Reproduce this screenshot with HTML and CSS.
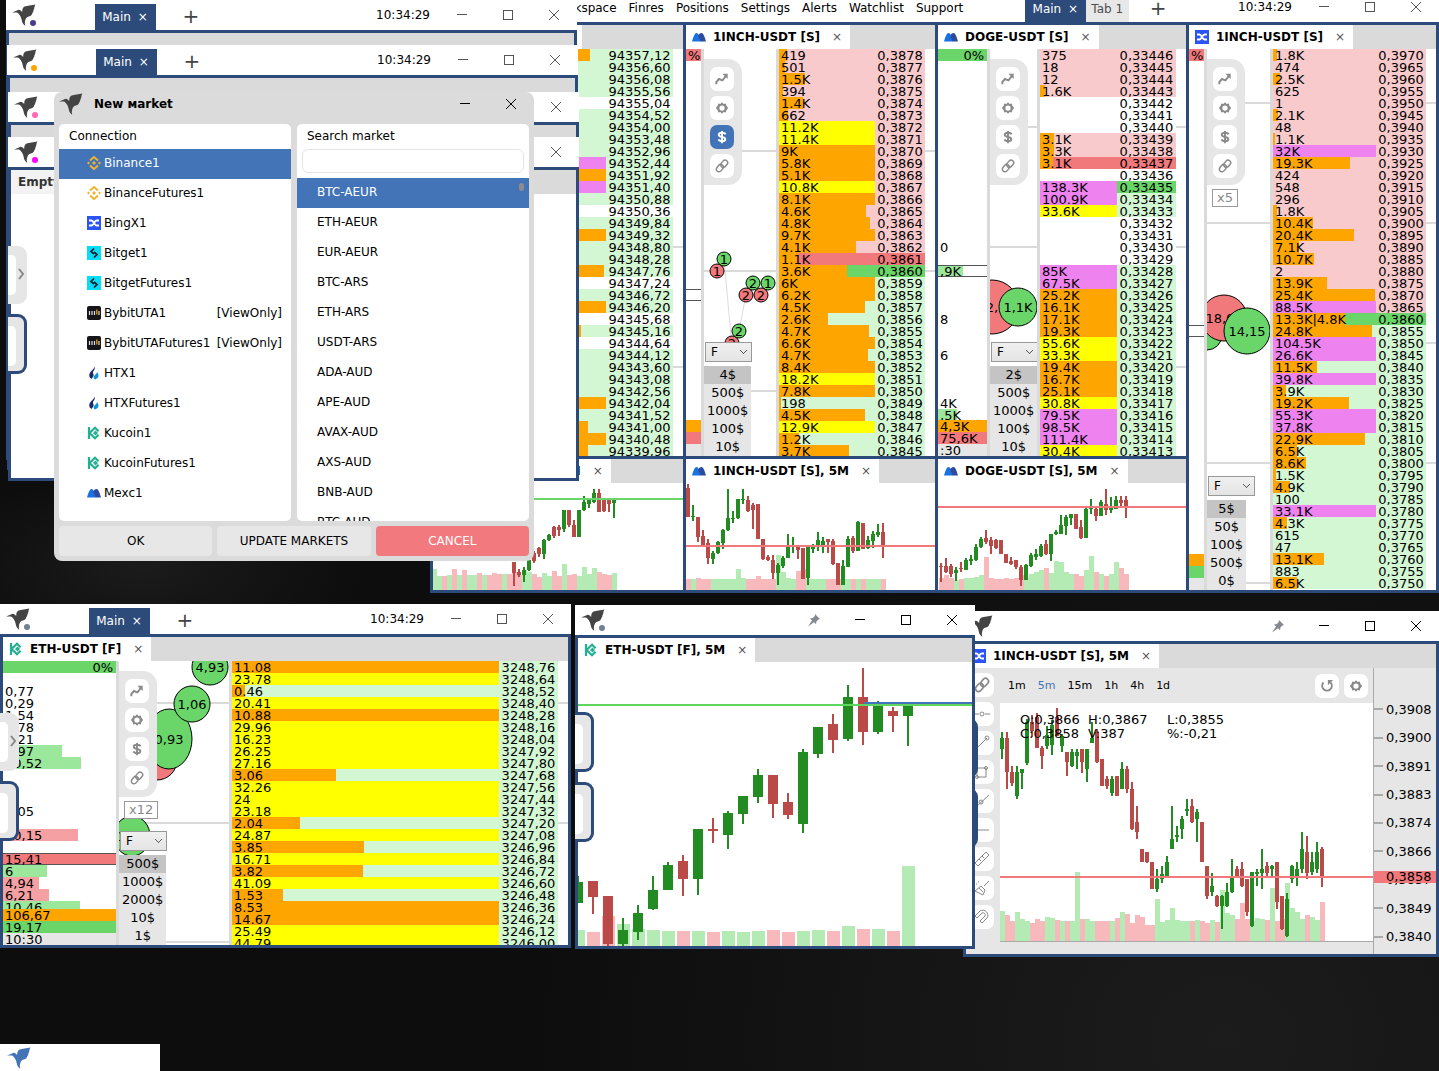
FILE: index.html
```html
<!DOCTYPE html>
<html lang="en">
<head>
    <meta charset="UTF-8">
    <meta name="viewport" content="width=device-width, initial-scale=1.0">
    <title>Trading desktop</title>
    <link rel="stylesheet" href="styles.css">
</head>
<body>

    <!-- Shared icons -->
    <svg class="sprite" aria-hidden="true">
        <symbol id="bird" viewBox="0 0 24 22"><path d="M0 8.400L5 6.600C6 5.600 7.600 5.600 8.600 6.400L10.200 8C10 5 11 3.400 12.600 2.600 15 1.200 20 1.400 23.400.4 22 2.400 22.800 4.400 21.400 6.400 21.600 8 19.800 9.400 19.600 11 18 12.800 15.600 12.400 14.200 14 13 16 12.400 19 13.200 21.800 11.400 20.600 10 18.600 9.800 16.600 9.400 14 8.600 11.600 6.400 9.400L5 8.400z"/></symbol>
        <symbol id="min" viewBox="0 0 12 12"><path d="M1 5.500h10" fill="none" stroke="currentColor"/></symbol>
        <symbol id="max" viewBox="0 0 12 12"><rect x="1.500" y="1.500" width="9" height="9" fill="none" stroke="currentColor"/></symbol>
        <symbol id="close" viewBox="0 0 12 12"><path d="M1 1l10 10M11 1L1 11" fill="none" stroke="currentColor"/></symbol>
        <symbol id="pin" viewBox="0 0 14 14"><path d="M8 1l5 5-1.600.6-2 2-.4 2.600-2-2L1 13.400l4-6-2-2 2.800-.4 2-2z" fill="#858a90"/></symbol>
        <symbol id="trend" viewBox="0 0 16 16"><path d="M1.500 14v-2.500l3-3.500 4 1.500 4-5" fill="none" stroke="currentColor" stroke-width="2.200"/><path d="M8.500 2H14.500V8z" fill="currentColor"/></symbol>
        <symbol id="gear" viewBox="0 0 16 16"><path d="M8 1.500l1.800 1.900 2.500-.6.700 2.500L15 8l-2 2.700-.7 2.500-2.500-.6L8 14.500l-1.800-1.900-2.500.6L3 10.700 1 8l2-2.700.7-2.500 2.500.6zM8 5a3 3 0 1 0 0 6 3 3 0 0 0 0-6z" fill="currentColor" fill-rule="evenodd"/></symbol>
        <symbol id="dollar" viewBox="0 0 16 16"><path d="M12 5C11.500 3.700 10 3.200 8 3.200 5.800 3.200 4.300 4 4.300 5.500c0 3.500 7.500 1.500 7.500 5 0 1.500-1.600 2.300-3.800 2.300-2 0-3.500-.7-4-2M8 1v14" fill="none" stroke="currentColor" stroke-width="2.200"/></symbol>
        <symbol id="link" viewBox="0 0 16 16"><g fill="none" stroke="currentColor" stroke-width="1.700"><rect x="6" y="2.500" width="9" height="6" rx="3" transform="rotate(-50 10.500 5.500)"/><rect x="1" y="7.500" width="9" height="6" rx="3" transform="rotate(-50 5.500 10.500)"/></g></symbol>
        <symbol id="binance" viewBox="0 0 14 14"><path d="M3 4.500L7 1l4 3.500M3 9.500L7 13l4-3.500" fill="none" stroke="#f0b32e" stroke-width="2"/><path d="M7 5l2 2-2 2-2-2zM1.500 5.500L3 7 1.500 8.500 0 7zM12.500 5.500L14 7l-1.500 1.500L11 7z" fill="#f0b32e"/></symbol>
        <symbol id="bingx" viewBox="0 0 14 14"><path d="M0 0h14v14H0z" fill="#2b54f5"/><path d="M2 4.500h2.500c2 0 3 5 5 5H12M2 9.500h2.500c2 0 3-5 5-5H12" fill="none" stroke="#fff" stroke-width="1.800"/></symbol>
        <symbol id="bitget" viewBox="0 0 14 14"><path d="M0 0h14v14H0z" fill="#05dcf7"/><path d="M7 2.500L4 5.500l3 2.500M7 6l3 2.500-3 3" fill="none" stroke="#12202a" stroke-width="1.700"/></symbol>
        <symbol id="bybit" viewBox="0 0 14 14"><rect width="14" height="14" rx="2" fill="#15151a"/><path d="M2.500 5v4M5 5v4M7.500 5v4M12 5v4" stroke="#ddd" stroke-width="1.200"/><path d="M9.800 3.500v5" stroke="#f7a600" stroke-width="1.200"/></symbol>
        <symbol id="htx" viewBox="0 0 14 14"><path d="M7.500.5c1 3-1 4-1.500 5.500-.4 1.500 1 2 .6 3.500C6.300 11 5 12 4.500 13 2 11.500 1.500 8.500 3.500 6 5 4 7 3 7.500.5z" fill="#1c2b63"/><path d="M10 6c2 2.500 2.500 6-2 7.500C5.500 12 7 10 8 9c1-.9 1.800-1.500 2-3z" fill="#0a93dc"/></symbol>
        <symbol id="kucoin" viewBox="0 0 14 14"><path d="M2 1v12M2.500 7L8 1.700l3.600 3.500M2.500 7L8 12.300l3.600-3.500" fill="none" stroke="#23af91" stroke-width="2.200"/><path d="M8.500 4.500L11 7 8.500 9.500 6 7z" fill="#23af91"/></symbol>
        <symbol id="mexc" viewBox="0 0 14 14"><path d="M0 11.500C1 8 2.500 3 4.500 3c1.500 0 2 1.500 2.500 3l2 5.500z" fill="#1972e2"/><path d="M6 5.500C7 4 8 3 9.500 3c2 0 3.500 5 4.500 8.500H8.500z" fill="#2d4b9e"/></symbol>
    </svg>

    <!-- Main workspace window -->
    <section class="win win-main">
        <header class="titlebar">
            <nav class="menu">
                <a href="#">Workspace</a>
                <a href="#">Finres</a>
                <a href="#">Positions</a>
                <a href="#">Settings</a>
                <a href="#">Alerts</a>
                <a href="#">Watchlist</a>
                <a href="#">Support</a>
            </nav>
            <button class="ws-tab active">Main <span>×</span></button>
            <button class="ws-tab">Tab 1</button>
            <button class="plus">+</button>
            <div class="controls">
                <time>10:34:29</time>
                <button aria-label="Minimize"><svg><use href="#min"/></svg></button>
                <button aria-label="Maximize"><svg><use href="#max"/></svg></button>
                <button aria-label="Close"><svg><use href="#close"/></svg></button>
            </div>
        </header>
        <div class="frame workspace">
            <div class="panel">
                <div class="tabs"><div class="tab"><svg><use href="#binance"/></svg>BTC-USDT [S]<button>×</button></div></div>
                <div class="ladder ladder-btc" data-ladder="btc"></div>
            </div>
            <div class="panel">
                <div class="tabs"><div class="tab"><svg><use href="#mexc"/></svg>1INCH-USDT [S]<button>×</button></div></div>
                <div class="ladder ladder-inch" data-ladder="inch"></div>
            </div>
            <div class="panel">
                <div class="tabs"><div class="tab"><svg><use href="#mexc"/></svg>DOGE-USDT [S]<button>×</button></div></div>
                <div class="ladder ladder-doge" data-ladder="doge"></div>
            </div>
            <div class="panel tall">
                <div class="tabs"><div class="tab"><svg><use href="#bingx"/></svg>1INCH-USDT [S]<button>×</button></div></div>
                <div class="ladder ladder-bingx" data-ladder="bingx"></div>
            </div>
            <div class="panel">
                <div class="tabs"><div class="tab"><svg><use href="#binance"/></svg>BTC-USDT [S], 5M<button>×</button></div></div>
                <svg class="chart" data-chart="btc"></svg>
            </div>
            <div class="panel">
                <div class="tabs"><div class="tab"><svg><use href="#mexc"/></svg>1INCH-USDT [S], 5M<button>×</button></div></div>
                <svg class="chart" data-chart="inch"></svg>
            </div>
            <div class="panel">
                <div class="tabs"><div class="tab"><svg><use href="#mexc"/></svg>DOGE-USDT [S], 5M<button>×</button></div></div>
                <svg class="chart" data-chart="doge"></svg>
            </div>
        </div>
    </section>

    <!-- Stack of empty workspaces -->
    <section class="win win-a">
        <header class="titlebar">
            <div class="logo"><svg><use href="#bird"/></svg><i class="dot indigo"></i></div>
            <button class="ws-tab active">Main <span>×</span></button>
            <button class="plus">+</button>
            <div class="controls">
                <time>10:34:29</time>
                <button aria-label="Minimize"><svg><use href="#min"/></svg></button>
                <button aria-label="Maximize"><svg><use href="#max"/></svg></button>
                <button aria-label="Close"><svg><use href="#close"/></svg></button>
            </div>
        </header>
        <div class="frame"></div>
    </section>
    <section class="win win-b">
        <header class="titlebar">
            <div class="logo"><svg><use href="#bird"/></svg><i class="dot orange"></i></div>
            <button class="ws-tab active">Main <span>×</span></button>
            <button class="plus">+</button>
            <div class="controls">
                <time>10:34:29</time>
                <button aria-label="Minimize"><svg><use href="#min"/></svg></button>
                <button aria-label="Maximize"><svg><use href="#max"/></svg></button>
                <button aria-label="Close"><svg><use href="#close"/></svg></button>
            </div>
        </header>
        <div class="frame"></div>
    </section>
    <section class="win win-c">
        <header class="titlebar">
            <div class="logo"><svg><use href="#bird"/></svg><i class="dot pink"></i></div>
            <div class="controls">
                <button aria-label="Close"><svg><use href="#close"/></svg></button>
            </div>
        </header>
        <div class="frame"></div>
    </section>
    <section class="win win-d">
        <header class="titlebar">
            <div class="logo"><svg><use href="#bird"/></svg><i class="dot magenta"></i></div>
            <div class="controls">
                <button aria-label="Close"><svg><use href="#close"/></svg></button>
            </div>
        </header>
        <div class="frame">
            <div class="panel">
                <div class="tabs"><div class="tab tab-empty">Empty</div></div>
            </div>
        </div>
        <button class="handle handle-top" aria-label="Expand"><svg><path d="M1 1l4 5-4 5"/></svg></button>
        <div class="handle handle-blue"></div>
    </section>

    <!-- New market dialog -->
    <section class="dialog">
        <header class="dialog-title">
            <svg class="dialog-bird"><use href="#bird"/></svg>
            <h1>New мarket</h1>
            <div class="controls dark">
                <button aria-label="Minimize"><svg><use href="#min"/></svg></button>
                <button aria-label="Close"><svg><use href="#close"/></svg></button>
            </div>
        </header>
        <div class="dialog-body">
            <div class="card">
                <h2>Connection</h2>
                <ul class="list connections">
                    <li class="selected"><svg><use href="#binance"/></svg>Binance1</li>
                    <li><svg><use href="#binance"/></svg>BinanceFutures1</li>
                    <li><svg><use href="#bingx"/></svg>BingX1</li>
                    <li><svg><use href="#bitget"/></svg>Bitget1</li>
                    <li><svg><use href="#bitget"/></svg>BitgetFutures1</li>
                    <li><svg><use href="#bybit"/></svg>BybitUTA1 <span>[ViewOnly]</span></li>
                    <li><svg><use href="#bybit"/></svg>BybitUTAFutures1 <span>[ViewOnly]</span></li>
                    <li><svg><use href="#htx"/></svg>HTX1</li>
                    <li><svg><use href="#htx"/></svg>HTXFutures1</li>
                    <li><svg><use href="#kucoin"/></svg>Kucoin1</li>
                    <li><svg><use href="#kucoin"/></svg>KucoinFutures1</li>
                    <li><svg><use href="#mexc"/></svg>Mexc1</li>
                </ul>
            </div>
            <div class="card">
                <h2><label for="search">Search market</label></h2>
                <input type="text" id="search">
                <ul class="list markets">
                    <li class="selected">BTC-AEUR</li>
                    <li>ETH-AEUR</li>
                    <li>EUR-AEUR</li>
                    <li>BTC-ARS</li>
                    <li>ETH-ARS</li>
                    <li>USDT-ARS</li>
                    <li>ADA-AUD</li>
                    <li>APE-AUD</li>
                    <li>AVAX-AUD</li>
                    <li>AXS-AUD</li>
                    <li>BNB-AUD</li>
                    <li>BTC-AUD</li>
                </ul>
            </div>
        </div>
        <footer class="dialog-buttons">
            <button>OK</button>
            <button>UPDATE MARKETS</button>
            <button class="cancel">CANCEL</button>
        </footer>
    </section>

    <!-- ETH order book -->
    <section class="win win-eth">
        <header class="titlebar">
            <div class="logo"><svg><use href="#bird"/></svg><i class="dot slate"></i></div>
            <button class="ws-tab active">Main <span>×</span></button>
            <button class="plus">+</button>
            <div class="controls">
                <time>10:34:29</time>
                <button aria-label="Minimize"><svg><use href="#min"/></svg></button>
                <button aria-label="Maximize"><svg><use href="#max"/></svg></button>
                <button aria-label="Close"><svg><use href="#close"/></svg></button>
            </div>
        </header>
        <div class="frame">
            <div class="panel">
                <div class="tabs"><div class="tab"><svg><use href="#kucoin"/></svg>ETH-USDT [F]<button>×</button></div></div>
                <div class="ladder ladder-eth" data-ladder="eth"></div>
            </div>
        </div>
        <button class="handle handle-top" aria-label="Expand"><svg><path d="M1 1l4 5-4 5"/></svg></button>
        <div class="handle handle-blue"></div>
    </section>

    <!-- 1INCH detached chart -->
    <section class="win win-inch-chart">
        <header class="titlebar">
            <div class="logo"><svg><use href="#bird"/></svg></div>
            <div class="controls dark">
                <button aria-label="Pin"><svg class="pin"><use href="#pin"/></svg></button>
                <button aria-label="Minimize"><svg><use href="#min"/></svg></button>
                <button aria-label="Maximize"><svg><use href="#max"/></svg></button>
                <button aria-label="Close"><svg><use href="#close"/></svg></button>
            </div>
        </header>
        <div class="frame">
            <div class="panel">
                <div class="tabs"><div class="tab"><svg><use href="#bingx"/></svg>1INCH-USDT [S], 5M<button>×</button></div></div>
                <div class="chart-view">
                    <div class="drawing">
                        <button aria-label="Link"><svg viewBox="0 0 16 16"><use href="#link"/></svg></button>
                        <button aria-label="Level"><svg viewBox="0 0 16 16"><path d="M0 8h5M11 8h5"/><circle cx="8" cy="8" r="2"/></svg></button>
                        <button aria-label="Segment"><svg viewBox="0 0 16 16"><path d="M3 13L13 3"/><circle cx="13" cy="3" r="2"/></svg></button>
                        <button aria-label="Rectangle"><svg viewBox="0 0 16 16"><path d="M3 4h9v9H3z"/><circle cx="12" cy="4" r="1.500"/><circle cx="3" cy="13" r="1.500"/></svg></button>
                        <button aria-label="Ray"><svg viewBox="0 0 16 16"><path d="M1 15L15 2"/><circle cx="7" cy="9" r="2"/></svg></button>
                        <button aria-label="Line"><svg viewBox="0 0 16 16"><path d="M1 8h14"/></svg></button>
                        <button aria-label="Ruler"><svg viewBox="0 0 16 16"><path d="M1 12L12 1l3 3L4 15zM5 8l2 2M8 5l2 2"/></svg></button>
                        <button aria-label="Clear"><svg viewBox="0 0 16 16"><path d="M15 1l-5 5M7 6l4 4-2 5-8-4zM5 8l4 4M2 4h1M4 2h1"/></svg></button>
                        <button aria-label="Magnet"><svg viewBox="0 0 16 16"><path d="M1 7l5-5c5-3 10 3 7 7l-5 5-2-2 5-5c1-2-1-4-3-3L3 9z"/></svg></button>
                    </div>
                    <div class="chart-main">
                        <div class="timeframes">
                            <a href="#">1m</a>
                            <a href="#" class="current">5m</a>
                            <a href="#">15m</a>
                            <a href="#">1h</a>
                            <a href="#">4h</a>
                            <a href="#">1d</a>
                            <button class="square first" aria-label="Reload"><svg viewBox="0 0 16 16"><path d="M4 4a5.500 5.500 0 1 0 8 0" fill="none" stroke="currentColor" stroke-width="2.200"/><path d="M9 1h6l-6 6z" fill="currentColor"/></svg></button>
                            <button class="square" aria-label="Settings"><svg><use href="#gear"/></svg></button>
                        </div>
                        <div class="plot">
                            <svg class="chart" data-chart="inchBig"></svg>
                            <div class="ohlc">
                                <span>O:0,3866</span><span>H:0,3867</span><span>L:0,3855</span>
                                <span>C:0,3858</span><span>V:387</span><span>%:-0,21</span>
                            </div>
                        </div>
                    </div>
                    <div class="scale">
                        <span>0,3908</span>
                        <span>0,3900</span>
                        <span>0,3891</span>
                        <span>0,3883</span>
                        <span>0,3874</span>
                        <span>0,3866</span>
                        <span>0,3857</span>
                        <span>0,3849</span>
                        <span>0,3840</span>
                        <b>0,3858</b>
                    </div>
                </div>
            </div>
        </div>
        <div class="handle handle-blue handle-first"></div>
        <div class="handle handle-blue"></div>
    </section>

    <!-- ETH detached chart -->
    <section class="win win-eth-chart">
        <header class="titlebar">
            <div class="logo"><svg><use href="#bird"/></svg><i class="dot slate"></i></div>
            <div class="controls dark">
                <button aria-label="Pin"><svg class="pin"><use href="#pin"/></svg></button>
                <button aria-label="Minimize"><svg><use href="#min"/></svg></button>
                <button aria-label="Maximize"><svg><use href="#max"/></svg></button>
                <button aria-label="Close"><svg><use href="#close"/></svg></button>
            </div>
        </header>
        <div class="frame">
            <div class="panel">
                <div class="tabs"><div class="tab"><svg><use href="#kucoin"/></svg>ETH-USDT [F], 5M<button>×</button></div></div>
                <svg class="chart" data-chart="eth"></svg>
            </div>
        </div>
        <div class="handle handle-blue handle-first"></div>
        <div class="handle handle-blue"></div>
    </section>

    <div class="taskbar"><svg><use href="#bird"/></svg></div>

    <script src="script.js"></script>
</body>
</html>
```

FILE: styles.css
```css
* {
    box-sizing: border-box;
}

body {
    margin: 0;
    height: 100vh;
    overflow: hidden;
    position: relative;
    font-family: Verdana, "DejaVu Sans", sans-serif;
    font-size: 12px;
    color: #000;
    background: radial-gradient(ellipse at 85% 97%, #1c1c1c, transparent 40%), radial-gradient(ellipse at 10% 53%, #1b1b1b, transparent 12%), #0d0d0d;
}

button {
    font: inherit;
    color: inherit;
    border: none;
    background: none;
    padding: 0;
}

a {
    color: inherit;
    text-decoration: none;
}

.sprite {
    position: absolute;
    width: 0;
    height: 0;
}

/* Windows */
.win {
    position: absolute;
    display: flex;
    flex-direction: column;
    background: #fff;
}

.win-main { left: 430px; right: 0; top: -8px; height: 601px; }
.win-a { left: 6px; top: 0; width: 571px; height: 460px; }
.win-b { left: 7px; top: 45px; width: 571px; height: 425px; }
.win-c { left: 8px; top: 92px; width: 571px; height: 380px; }
.win-d { left: 8px; top: 137px; width: 571px; height: 344px; }
.win-eth { left: 0; top: 604px; width: 571px; height: 344px; }
.win-eth-chart { left: 575px; top: 605px; width: 400px; height: 344px; }
.win-inch-chart { left: 963px; right: 0; top: 611px; height: 346px; }

.titlebar {
    display: flex;
    flex: none;
    height: 30px;
    align-items: flex-end;
}

.frame {
    flex: 1;
    min-height: 0;
    display: grid;
    border: 3px solid #2d4b7a;
    background: #dadada;
}

.workspace {
    grid-template-columns: 250fr 249fr 248fr 247fr;
    grid-template-rows: minmax(0, 1fr) 131px;
    gap: 3px;
    background: #2d4b7a;
}

.logo {
    position: relative;
    width: 89px;
    height: 30px;
    padding: 4px 6px;
}

.logo svg {
    width: 24px;
    height: 22px;
    fill: #444;
}

.dot {
    position: absolute;
    left: 24px;
    top: 20px;
    width: 6px;
    height: 6px;
    border-radius: 50%;
}

.indigo { background: #483d8b; }
.orange { background: #ffa500; }
.pink { background: #ff69b4; }
.magenta { background: #f0f; }
.slate { background: #708090; }

.menu {
    display: flex;
    gap: 12px;
    margin: 0 62px 0 121px;
    line-height: 28px;
}

.ws-tab {
    height: 26px;
    padding: 0 6px 0 5px;
    background: #e8e8e8;
    color: #4d4d4d;
}

.ws-tab.active {
    width: 61px;
    background: #2d4b7a;
    color: #fff;
    white-space: nowrap;
}

.ws-tab span {
    margin-left: 3px;
}

.plus {
    width: 70px;
    height: 27px;
    font-size: 20px;
    line-height: 27px;
    color: #444;
}

.win-main .plus {
    width: 58px;
}

.controls {
    display: flex;
    align-items: center;
    height: 30px;
    margin-left: auto;
    color: #555;
}

.controls.dark {
    color: #000;
}

.controls time {
    margin-right: 9px;
    color: #000;
}

.controls button {
    width: 46px;
    height: 30px;
}

.controls svg {
    display: block;
    width: 12px;
    height: 12px;
    margin: auto;
}

.controls .pin {
    width: 14px;
    height: 14px;
}

/* Panels and their tabs */
.panel {
    display: flex;
    flex-direction: column;
    min-width: 0;
    min-height: 0;
    overflow: hidden;
    background: #fff;
}

.tall {
    grid-row: span 2;
}

.tabs {
    display: flex;
    flex: none;
    height: 24px;
    background: #dadada;
}

.tab {
    display: flex;
    align-items: center;
    padding: 0 8px 0 6px;
    font-weight: bold;
    white-space: pre;
    background: #fff;
}

.tab svg {
    width: 14px;
    height: 14px;
    margin-right: 7px;
}

.tab button {
    width: 10px;
    margin-left: 12px;
    font-weight: normal;
    color: #555;
}

.tab-empty {
    padding: 0 30px 0 7px;
    background: #f3f3f3;
    color: #333;
}

.handle {
    position: absolute;
    left: 0;
    width: 19px;
    height: 58px;
    background: #e6e6e6;
    border-radius: 0 9px 9px 0;
    color: #888;
}

.handle::before {
    content: "";
    position: absolute;
    left: 0;
    top: 9px;
    width: 8px;
    height: 40px;
    background: #fff;
    border-radius: 0 5px 5px 0;
}

.handle svg {
    position: absolute;
    left: 10px;
    top: 22px;
    width: 7px;
    height: 12px;
    fill: none;
    stroke: #888;
    stroke-width: 2;
}

.handle-top {
    top: 109px;
}

.handle-blue {
    top: 177px;
    height: 60px;
    border: 3px solid #2d4b7a;
    border-left: none;
}

.handle-first {
    top: 107px;
}

.win-inch-chart .handle {
    width: 15px;
}

/* Order book */
.ladder {
    display: flex;
    flex: 1;
    min-height: 0;
    font-size: 13px;
    line-height: 10px;
}

.cluster {
    display: flex;
    flex-direction: column;
    flex: none;
    overflow: hidden;
    border-right: 3px solid #dadada;
    white-space: nowrap;
}

.cluster-rows {
    flex: 1;
    min-height: 0;
    overflow: hidden;
}

.cluster-row {
    height: 12px;
    padding: 2px 0 0 2px;
    background-repeat: no-repeat;
}

.cluster-row.right {
    padding: 2px 3px 0 0;
    text-align: right;
}

.cluster-row.boxed {
    padding-top: 1px;
    border-top: 1px solid #555;
    border-bottom: 1px solid #555;
}

.ticks {
    position: relative;
    display: flex;
    flex-direction: column;
    align-items: flex-start;
    flex: none;
    overflow: hidden;
    padding-top: 10px;
    border-right: 3px solid #dadada;
}

.bubbles {
    position: absolute;
    left: 0;
    top: 0;
    width: 100%;
    height: 100%;
    text-anchor: middle;
}

.bubbles ellipse {
    stroke: #000;
}

.bubbles .grid {
    stroke: #dadada;
    stroke-width: 2;
}

.ladder-btc .cluster { width: 53px; }
.ladder-btc .ticks { width: 83px; }
.ladder-inch .cluster { width: 18px; }
.ladder-inch .ticks { width: 75px; }
.ladder-doge .cluster { width: 52px; }
.ladder-doge .ticks { width: 50px; }
.ladder-bingx .cluster { width: 18px; }
.ladder-bingx .ticks { width: 66px; }
.ladder-eth .cluster { width: 116px; }
.ladder-eth .ticks { width: 113px; }

.tools {
    position: relative;
    display: flex;
    flex-direction: column;
    gap: 5px;
    padding: 8px 8px 7px 6px;
    background: #e6e6e6;
    border-radius: 0 14px 14px 0;
}

.square {
    display: flex;
    align-items: center;
    justify-content: center;
    width: 24px;
    height: 24px;
    border-radius: 7px;
    background: #fff;
    color: #8a8a8a;
}

.square svg {
    width: 14px;
    height: 14px;
}

.square.on {
    background: #4274b7;
    color: #fff;
}

.zoom {
    position: relative;
    margin: 4px 0 0 5px;
    padding: 0 4px;
    border: 1px solid #999;
    background: #fff;
    color: #888;
    line-height: 16px;
}

.mode {
    position: relative;
    flex: none;
    width: 47px;
    height: 20px;
    margin: auto 0 4px 1px;
    padding: 0 5px;
    appearance: none;
    border: 1px solid #999;
    border-radius: 0;
    font: 12px Verdana, "DejaVu Sans", sans-serif;
    color: #000;
    background: linear-gradient(45deg, transparent 40%, #555 40%, #555 60%, transparent 60%) 34px 7px / 4px 4px no-repeat, linear-gradient(-45deg, transparent 40%, #555 40%, #555 60%, transparent 60%) 37px 7px / 4px 4px no-repeat, linear-gradient(#f0f0f0, #e4e4e4);
}

.sizes {
    position: relative;
    margin: 0;
    padding: 0;
    list-style: none;
    text-align: center;
    line-height: 18px;
    background: #e6e6e6;
}

.sizes li {
    padding: 0 3px;
}

.sizes li:first-child {
    background: #c4c4c4;
}

.book {
    flex: 1;
    min-width: 0;
    overflow: hidden;
}

.book table {
    width: 100%;
    table-layout: fixed;
    border-collapse: collapse;
}

.book td {
    height: 12px;
    padding: 2px 0 0;
    white-space: nowrap;
}

.book .vol {
    padding-left: 2px;
    background-repeat: no-repeat;
}

.book .price {
    width: 50px;
    text-align: center;
}

.ladder-btc .price { width: 67px; }
.ladder-doge .price,
.ladder-eth .price { width: 59px; }

.book .gap {
    width: 10px;
    background: #fff;
}

.book .round .gap {
    background: linear-gradient(#dadada, #dadada) 0 5px / 100% 2px no-repeat;
}

.ask td { background-color: #f8cacc; }
.bid td { background-color: #d3f6d3; }
.best-ask td { background-color: #f1797c; }
.best-bid td { background-color: #6ad66a; }
.book tr .gap { background-color: #fff; }

.fill-orange { background-image: linear-gradient(#ffa500, #ffa500); }
.fill-yellow { background-image: linear-gradient(#ff0, #ff0); }
.fill-violet { background-image: linear-gradient(#ee82ee, #ee82ee); }
.fill-red { background-image: linear-gradient(#f1797c, #f1797c); }
.fill-green { background-image: linear-gradient(#6ad66a, #6ad66a); }
.fill-rose { background-image: linear-gradient(#f5a0a2, #f5a0a2); }
.fill-mint { background-image: linear-gradient(#9be79b, #9be79b); }
.fill-gray { background-image: linear-gradient(#e6e6e6, #e6e6e6); }

/* Charts */
.chart {
    display: block;
    flex: 1;
    width: 100%;
    height: 100%;
    min-height: 0;
}

.chart-view {
    display: flex;
    flex: 1;
    min-height: 0;
    background: #e6e6e6;
}

.drawing {
    display: flex;
    flex-direction: column;
    flex: none;
    gap: 5px;
    width: 34px;
    padding: 5px 0 0 4px;
}

.drawing button {
    width: 24px;
    height: 24px;
    padding: 4px;
    border-radius: 7px;
    background: #fff;
    color: #888;
}

.drawing svg {
    display: block;
    width: 16px;
    height: 16px;
    fill: none;
    stroke: #888;
}

.chart-main {
    display: flex;
    flex: 1;
    flex-direction: column;
    min-width: 0;
    padding-bottom: 12px;
}

.timeframes {
    display: flex;
    flex: none;
    align-items: center;
    gap: 12px;
    height: 35px;
    padding: 0 5px 0 8px;
    font-size: 11px;
}

.timeframes .current {
    color: #4274b7;
}

.timeframes .first {
    margin: 0 -7px 0 auto;
}

.plot {
    position: relative;
    flex: 1;
    min-height: 0;
    background: #fff;
    border-bottom: 1px solid #aaa;
}

.ohlc {
    position: absolute;
    left: 20px;
    top: 10px;
    display: grid;
    grid-template-columns: 68px 79px auto;
    font-size: 13px;
    line-height: 14px;
}

.scale {
    position: relative;
    display: grid;
    flex: none;
    grid-auto-rows: 1fr;
    align-items: center;
    width: 63px;
    padding: 27px 0 3px;
    border-left: 1px solid #aaa;
    font-size: 13px;
}

.scale span {
    display: flex;
    align-items: center;
    gap: 3px;
}

.scale span::before {
    content: "";
    width: 9px;
    height: 2px;
    background: #aaa;
}

.scale b {
    position: absolute;
    left: 0;
    right: 0;
    top: 203px;
    padding-left: 12px;
    font-weight: normal;
    line-height: 12px;
    background: #f1797c;
}

/* Dialog */
.dialog {
    position: absolute;
    left: 54px;
    top: 92px;
    width: 480px;
    height: 469px;
    display: flex;
    flex-direction: column;
    padding: 0 5px 5px;
    border-radius: 8px;
    background: #dbdbdb;
}

.dialog-title {
    display: flex;
    align-items: center;
    height: 32px;
    padding-bottom: 8px;
}

.dialog-bird {
    width: 24px;
    height: 22px;
    fill: #444;
}

.dialog h1 {
    margin: 0 0 0 11px;
    font-size: 12px;
}

.dialog-title .controls {
    margin-right: -5px;
}

.dialog-body {
    display: grid;
    grid-template-columns: 1fr 1fr;
    gap: 6px;
    flex: 1;
    min-height: 0;
}

.card {
    display: flex;
    flex-direction: column;
    min-height: 0;
    overflow: hidden;
    border-radius: 5px;
    background: #fff;
}

.card h2 {
    margin: 0;
    padding-left: 10px;
    font-size: 12px;
    font-weight: normal;
    line-height: 25px;
}

.card input {
    flex: none;
    height: 24px;
    margin: 0 5px 5px;
    padding: 0 8px;
    border: 1px solid #e4e4e4;
    border-radius: 6px;
}

.list {
    margin: 0;
    padding: 0;
    list-style: none;
    min-height: 0;
    overflow: hidden;
    line-height: 28px;
}

.list li {
    display: flex;
    align-items: center;
    height: 30px;
    padding: 0 9px 2px 20px;
}

.connections li {
    padding-left: 28px;
}

.list svg {
    width: 14px;
    height: 14px;
    margin-right: 3px;
}

.list span {
    margin-left: auto;
}

.list .selected {
    background: #4274b7;
    color: #fff;
}

.markets {
    position: relative;
}

.markets::after {
    content: "";
    position: absolute;
    right: 5px;
    top: 5px;
    width: 5px;
    height: 8px;
    border-radius: 3px;
    background: #8c8c8c;
}

.dialog-buttons {
    display: grid;
    grid-template-columns: 1fr 1fr 1fr;
    gap: 5px;
    margin-top: 5px;
}

.dialog-buttons button {
    height: 30px;
    border-radius: 4px;
    background: #e7e7e7;
}

.dialog-buttons .cancel {
    background: #f27a7e;
    color: #fff;
}

.taskbar {
    position: absolute;
    left: 0;
    bottom: 0;
    width: 160px;
    height: 27px;
    padding: 3px 7px;
    background: #fff;
}

.taskbar svg {
    width: 24px;
    height: 22px;
    fill: #4274b7;
}
```

FILE: script.js
```js
const fills = { o: 'orange', y: 'yellow', v: 'violet', r: 'red', g: 'green', p: 'rose', m: 'mint', e: 'gray' };
const sides = { a: 'ask', b: 'bid', A: 'best-ask', B: 'best-bid', w: 'none' };

// book rows: "side volume fill width", width is in pixels, no width means the whole cell
const ladders = {
    btc: {
        start: 94357.12, step: 0.52, digits: 2, round: [16, 26],
        tools: -1, sizes: [],
        rows: 'b - o 21;b;b;b;w;b;b;b;b;b - v;b - o;b - v;b;w;b;b - o;b;b;b - o 35;w;b;b - o;w;b - o 12;w;b;b;b;b;b - o;b;b - o 19;b - o;b - o 19',
        cluster: [], footer: [], lines: [], bubbles: []
    },
    inch: {
        start: 0.3878, step: 0.0001, digits: 4, round: [8, 18],
        tools: 2, sizes: ['4$', '500$', '1000$', '100$', '10$'],
        rows: 'a 419 o 8;a 501 o 6;a 1.5K o 26;a 394 o 4;a 1.4K o 24;a 662 o 9;a 11.2K y;a 11.4K y;a 9K o;a 5.8K o;a 5.1K o;a 10.8K y;a 8.1K o;a 4.6K o 87;a 4.8K o 91;a 9.7K o;a 4.1K o 77;A 1.1K o 19;B 3.6K o 68;b 6K o;b 6.2K o;b 4.5K o 86;b 2.6K o 49;b 4.7K o 90;b 6.6K o;b 4.7K o 89;b 8.4K o;b 18.2K y;b 7.8K o;b 198 o 2;b 4.5K o 86;b 12.9K y;b 1.2K o 20;b 3.7K o 70',
        cluster: [[0, '%', 'r'], [20, '', '', 0, 'boxed']],
        footer: [['', 'o'], ['', 'r'], ['', 'e']],
        lines: [102, 222, 342],
        path: 'M20 210 28 298M35 282 42 246',
        bubbles: [[20, 210, 7, 7, 'g', '1'], [13, 222, 7, 7, 'r', '1'], [49, 234, 7, 7, 'g', '2'], [64, 234, 7, 7, 'g', '1'], [42, 246, 7, 7, 'r', '2'], [57, 246, 7, 7, 'r', '2'], [28, 294, 7, 7, 'r', '2'], [35, 282, 7, 7, 'g', '2']]
    },
    doge: {
        start: 0.33446, step: 0.00001, digits: 5, round: [6, 16, 26],
        tools: -1, sizes: ['2$', '500$', '1000$', '100$', '10$'],
        rows: 'a 375;a 18;a 12;a 1.6K o 5;w;w;w;a 3.1K o 14;a 3.3K o 14;A 3.1K o 13;w;B 138.3K v;b 100.9K v;b 33.6K y;w;w;w;w;b 85K v;b 67.5K v;b 25.2K o;b 16.1K o;b 17.1K o;b 19.3K o;b 55.6K y;b 33.3K y;b 19.4K o;b 16.7K o;b 25.1K o;b 30.8K y;b 79.5K v;b 98.5K v;b 111.4K v;b 30.4K y',
        cluster: [[0, '0%', 'g', 0, 'right'], [16, '0'], [18, ',9K', 'm', 25, 'boxed'], [22, '8'], [25, '6'], [29, '4K'], [30, ',5K', 'm', 19]],
        footer: [['4,3K', 'o'], ['75,6K', 'r'], [':30', 'e']],
        lines: [78, 198],
        bubbles: [[2, 258, 27, 27, 'r', '2,'], [28, 258, 19, 19, 'g', '1,1K']]
    },
    bingx: {
        start: 0.397, step: 0.0005, digits: 4, round: [4, 14, 24, 34],
        tools: -1, zoom: 'x5', sizes: ['5$', '50$', '100$', '500$', '0$'],
        rows: 'a 1.8K o 4;a 474;a 2.5K o 7;a 625;a 1;a 2.1K o 5;a 48;a 1.1K o 2;a 32K v 103;a 19.3K o 77;a 424;a 548;a 296;a 1.8K o 4;a 10.4K o 40;a 20.4K o 81;a 7.1K o 26;a 10.7K o 41;a 2;a 13.9K o 54;a 25.4K o 102;a 88.5K v 103;B 13.3K|4.8K o 72;b 24.8K o 99;b 104.5K v 103;b 26.6K v 103;b 11.5K o 44;b 39.8K v 103;b 3.9K o 13;b 19.2K o 76;b 55.3K v 103;b 37.8K v 103;b 22.9K o 92;b 6.5K o 24;b 8.6K o 33;b 1.5K o 3;b 4.9K o 17;b 100;b 33.1K v 103;b 4.3K o 14;b 615;b 47;b 13.1K o 51;b 883;b 6.5K o 24',
        cluster: [[0, '%', 'r'], [23, '', '', 0, 'boxed']],
        footer: [['', 'o'], ['', 'g'], ['', 'e']],
        lines: [54, 174, 414, 534],
        bubbles: [[0, 286, 15, 15, 'g', ''], [17, 269, 23, 23, 'r', '18,05'], [40, 282, 23, 23, 'g', '14,15']]
    },
    eth: {
        start: 3248.76, step: 0.12, digits: 2, round: [3, 13],
        tools: -1, zoom: 'x12', sizes: ['500$', '1000$', '2000$', '10$', '1$'],
        rows: 'b 11.08 o;b 23.78 y;b 0.46 o 13;b 20.41 y;b 10.88 o;b 29.96 y;b 16.23 y;b 26.25 y;b 27.16 y;b 3.06 o 104;b 32.26 y;b 24 y;b 23.18 y;b 2.04 o 68;b 24.87 y;b 3.85 o 132;b 16.71 y;b 3.82 o 131;b 41.09 y;b 1.53 o 51;b 8.53 o;b 14.67 o;b 25.49 y;b 44.79 y',
        cluster: [[0, '0%', 'g', 0, 'right'], [2, '0,77'], [3, '0,29'], [4, '1,54'], [5, '1,78'], [6, '0,21'], [7, '7,97', 'm', 59], [8, '10,52', 'm', 78], [12, '2,05'], [14, '10,15', 'p', 75], [16, '15,41', 'r', 0, 'boxed'], [17, '6', 'm', 44], [18, '4,94', 'p', 36], [19, '6,21', 'p', 46], [20, '10,46', 'm', 77]],
        footer: [['106,67', 'o'], ['19,17', 'g'], ['10:30', 'e']],
        lines: [42, 162, 281],
        path: 'M22 140 15 168',
        bubbles: [[13, 175, 18, 20, 'g', '1,28'], [38, 99, 20, 20, 'r', ''], [50, 78, 23, 30, 'g', '0,93'], [73, 43, 18, 18, 'g', '1,06'], [91, 6, 18, 18, 'g', '4,93']]
    }
};

function clusterRow(text, fill, width, extra) {
    const cls = (fill ? ' fill-' + fills[fill] : '') + (extra ? ' ' + extra : '');
    const size = width ? ` style="background-size:${width}px 100%"` : '';
    return `<div class="cluster-row${cls}"${size}>${text}</div>`;
}

function renderLadder(el, d) {
    // left column with traded volume
    let cluster = '';
    const last = d.cluster.length ? d.cluster[d.cluster.length - 1][0] : -1;
    for (let i = 0; i <= last; i++) {
        const row = d.cluster.find(r => r[0] === i);
        cluster += row ? clusterRow(row[1], row[2], row[3], row[4]) : clusterRow('');
    }
    const footer = d.footer.map(f => clusterRow(f[0], f[1])).join('');

    // trades drawn as bubbles
    let bubbles = d.lines.map(y => `<path class="grid" d="M0 ${y}h200"/>`).join('');
    if (d.path) bubbles += `<path d="${d.path}" stroke="#ddd" fill="none"/>`;
    d.bubbles.forEach(([x, y, rx, ry, c, text]) => {
        bubbles += `<ellipse cx="${x}" cy="${y}" rx="${rx}" ry="${ry}" fill="${c === 'g' ? '#6ad66a' : '#f1797c'}"/><text x="${x}" y="${y + 5}">${text}</text>`;
    });

    const tools = ['trend', 'gear', 'dollar', 'link'].map((name, i) =>
        `<button class="square${i === d.tools ? ' on' : ''}" aria-label="${name}"><svg><use href="#${name}"/></svg></button>`).join('');

    // price rows
    const rows = d.rows.split(';').map((line, i) => {
        const [side, vol, fill, width] = line.split(' ');
        const price = (d.start - d.step * i).toFixed(d.digits).replace('.', ',');
        const cls = sides[side] + (d.round.includes(i) ? ' round' : '');
        const bar = fill ? ` fill-${fills[fill]}` : '';
        const size = width ? ` style="background-size:${width}px 100%"` : '';
        return `<tr class="${cls}"><td class="vol${bar}"${size}>${vol && vol !== '-' ? vol : ''}</td><td class="price">${price}</td><td class="gap"></td></tr>`;
    }).join('');

    el.innerHTML = `
        <div class="cluster"><div class="cluster-rows">${cluster}</div>${footer}</div>
        <div class="ticks">
            <svg class="bubbles">${bubbles}</svg>
            <div class="tools">${tools}</div>
            ${d.zoom ? `<button class="zoom">${d.zoom}</button>` : ''}
            <select class="mode" aria-label="Mode"><option>F</option></select>
            <ul class="sizes">${d.sizes.map(s => `<li>${s}</li>`).join('')}</ul>
        </div>
        <div class="book"><table>${rows}</table></div>`;
}

// candles: "color open close high low volume", all in pixels from the top of the plot
const charts = {
    eth: {
        x: 0, step: 15, body: 10, base: 284, line: 43, color: '#5fd65f', extra: [286, 41],
        candles: 'g 220 241 214 241 16;r 219 235 219 252 14;r 234 282 234 284 30;g 268 282 256 284 22;g 251 270 243 278 17;g 228 247 214 248 16;g 203 228 200 228 15;r 199 217 193 234 15;g 167 217 167 233 15;r 167 169 156 181 14;g 151 173 149 187 15;g 134 152 134 162 14;g 113 135 107 141 15;r 113 142 113 156 16;r 140 153 131 157 14;g 90 162 87 171 15;g 65 92 65 96 16;r 62 78 52 91 15;g 35 77 23 79 20;r 35 70 6 83 17;g 43 70 39 72 17;r 49 54 45 70 15;g 43 54 43 84 80'
    },
    btc: {
        x: 1, step: 5, body: 4, base: 109, line: 16, color: '#6ad66a',
        candles: 'g 0 0 0 0 23;g 0 0 0 0 16;r 0 0 0 0 16;g 0 0 0 0 17;r 0 0 0 0 23;g 0 0 0 0 17;r 0 0 0 0 22;g 0 0 0 0 17;g 0 0 0 0 17;r 0 0 0 0 19;g 0 0 0 0 17;r 0 0 0 0 17;r 0 0 0 0 19;r 0 0 0 0 18;g 0 0 0 0 18;r 0 0 0 0 18;r 79 90 79 103 20;r 89 92 86 94 17;g 87 92 84 99 22;g 77 87 72 88 20;r 70 78 68 80 18;r 65 71 64 74 15;g 57 71 56 76 19;g 52 57 51 58 16;r 44 53 43 55 21;r 44 47 42 53 16;g 27 46 27 49 28;r 27 42 27 44 17;r 42 54 37 54 18;g 27 54 27 54 16;g 19 27 13 28 25;g 17 21 16 25 18;g 10 19 6 20 24;r 10 29 6 29 20;r 17 28 15 29 18;r 17 21 15 29 17;g 17 20 16 35 19'
    },
    inch: {
        x: 2, step: 5, body: 4, base: 108, line: 63, color: '#f1797c',
        candles: 'r 5 34 1 34 12;g 33 34 22 38 12;r 34 54 34 59 13;r 53 62 47 63 12;r 60 75 56 81 12;g 70 76 68 81 12;g 59 70 58 71 12;g 47 60 46 66 12;g 35 47 6 48 12;g 35 36 28 40 12;g 16 35 16 36 22;g 16 17 6 21 13;r 17 28 13 29 12;r 22 27 20 46 12;r 21 56 21 56 15;r 56 76 56 77 12;r 74 77 72 78 12;r 77 90 72 96 12;g 82 90 80 102 36;g 75 83 73 85 19;g 64 75 51 75 13;g 63 64 54 70 12;r 63 67 62 76 20;r 65 96 65 96 22;g 64 95 64 102 12;g 62 66 61 70 12;g 57 62 49 68 12;g 58 62 54 70 12;r 56 59 56 70 12;r 58 81 56 82 12;r 80 102 80 102 12;g 83 102 77 102 12;g 56 84 53 84 12;r 55 68 53 70 12;g 39 68 38 68 12;r 40 66 40 66 12;g 57 65 53 66 12;g 51 58 48 65 12;g 49 52 41 54 12;r 49 62 40 75 12'
    },
    doge: {
        x: 3, step: 5, body: 4, base: 109, line: 24, color: '#f1797c',
        candles: 'r 83 84 80 99 14;r 83 89 75 90 17;r 83 91 81 94 14;g 87 90 84 98 12;r 85 86 79 89 13;g 77 87 75 87 14;g 76 78 72 82 14;g 64 77 61 78 15;g 56 64 54 65 17;r 55 59 47 61 35;r 57 63 54 71 14;r 57 65 56 66 13;r 57 71 57 71 13;r 71 80 71 80 14;r 78 81 74 82 13;r 77 84 77 86 14;r 84 97 82 103 17;g 82 97 81 97 14;g 72 83 70 84 18;g 71 74 66 77 20;g 63 73 61 74 22;r 61 71 57 72 24;g 51 71 51 78 19;g 49 51 47 52 31;g 42 51 32 51 30;g 34 43 32 52 20;g 31 35 31 42 18;r 31 46 31 46 18;r 44 55 37 56 16;g 26 55 24 55 22;g 25 26 16 31 36;r 26 33 24 38 20;g 19 33 17 33 18;r 21 27 6 32 16;g 23 27 14 30 18;g 17 26 13 26 30;r 17 20 13 24 24;r 17 24 13 35 18'
    },
    inchBig: {
        x: 2, step: 5, body: 4, base: 238, line: 174, color: '#f1797c',
        candles: 'g 35 46 29 56 30;r 35 69 29 86 26;r 69 80 63 83 20;g 69 93 63 96 29;g 66 70 66 86 22;g 19 60 16 62 20;r 19 28 12 34 18;r 14 45 10 45 22;r 45 53 43 66 20;g 32 43 23 46 24;g 22 42 17 52 23;r 14 33 5 33 21;g 33 43 31 49 20;r 49 59 49 73 20;g 49 63 46 64 20;g 49 53 46 66 69;r 46 59 46 70 22;g 46 66 46 79 22;g 35 40 19 40 20;r 29 59 26 60 20;r 56 83 56 83 20;r 76 83 73 86 20;g 76 90 73 93 20;r 73 93 73 93 23;g 66 86 59 86 29;r 66 86 63 90 27;r 86 126 79 127 18;r 119 129 103 136 26;r 146 159 146 159 24;r 149 159 149 160 16;r 159 186 159 186 16;g 176 186 166 189 42;g 171 176 163 180 19;g 159 173 153 173 21;g 136 146 103 146 33;g 132 134 123 139 21;g 116 126 113 136 20;g 106 108 96 113 20;r 103 119 96 120 20;g 109 116 106 139 21;r 119 159 119 159 20;r 163 193 163 196 18;g 183 189 170 193 21;r 193 203 192 204 19;g 193 203 192 226 51;g 189 203 180 204 28;g 173 189 156 190 26;r 166 173 163 174 22;r 166 183 159 184 38;r 176 209 176 213 22;g 169 223 169 224 20;g 169 171 166 183 23;g 166 170 146 186 22;r 163 170 159 173 21;g 163 166 162 173 53;r 159 199 159 206 20;r 193 226 193 227 22;g 196 233 190 234 58;g 163 176 162 180 33;g 166 173 159 183 29;g 146 166 129 170 22;r 149 170 133 176 26;g 159 169 149 172 24;g 149 166 139 170 21;r 146 173 144 184 39'
    }
};

function renderChart(el, d) {
    const list = d.candles.split(';').map(c => c.split(' '));
    const bar = d.step > 10 ? d.step - 2 : d.step;
    let volumes = '';
    let candles = '';
    list.forEach(([color, top, bottom, high, low, vol], i) => {
        const x = d.x + i * d.step;
        const paint = color === 'g' ? '#228b22' : '#b94a48';
        volumes += `<rect x="${x - Math.floor(bar / 2)}" y="${d.base - vol}" width="${bar}" height="${vol}" fill="${color === 'g' ? '#b4ebb4' : '#f7b9bb'}"/>`;
        if (+low) {
            candles += `<path d="M${x} ${high}V${low}" stroke="${paint}" stroke-width="2"/><rect x="${x - d.body / 2}" y="${top}" width="${d.body}" height="${bottom - top}" fill="${paint}"/>`;
        }
    });
    const extra = d.extra ? `<path d="M${d.extra[0]} ${d.extra[1]}h200" stroke="#4274b7" stroke-width="2"/>` : '';
    el.innerHTML = volumes + candles + extra + `<path d="M0 ${d.line}h600" stroke="${d.color}" stroke-width="2"/>`;
}

document.querySelectorAll('[data-ladder]').forEach(el => renderLadder(el, ladders[el.dataset.ladder]));
document.querySelectorAll('[data-chart]').forEach(el => renderChart(el, charts[el.dataset.chart]));
```
